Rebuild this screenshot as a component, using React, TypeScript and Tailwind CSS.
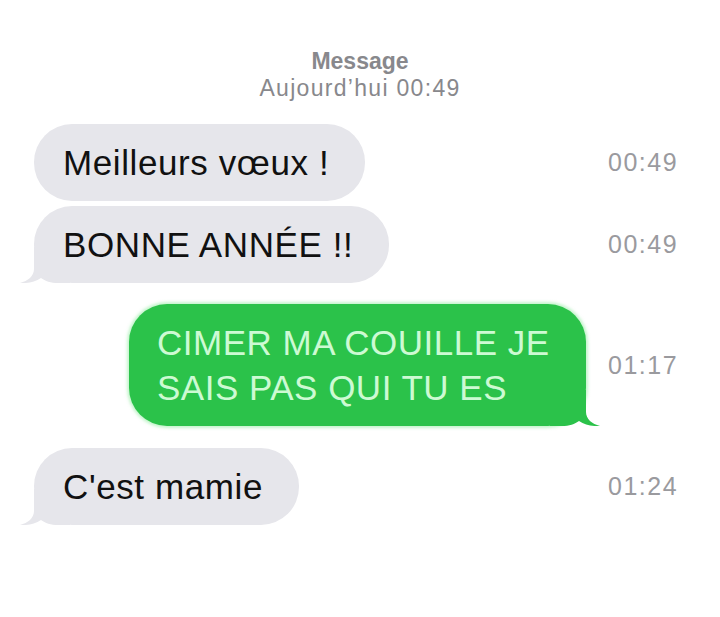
import React from "react";

const Tail = ({ color, side }: { color: string; side: "left" | "right" }) => (
  <svg
    width="50"
    height="36"
    viewBox="0 0 50 36"
    className={
      side === "left"
        ? "absolute bottom-0 left-[-14px]"
        : "absolute bottom-0 right-[-14px] -scale-x-100"
    }
  >
    <path
      d="M14 0 L14 22 C14 29 8 34 0 36 C8 36.5 15 35 21 31 C25 34 31 36 38 36 L50 36 L50 0 Z"
      fill={color}
    />
  </svg>
);

const Time = ({ children }: { children: React.ReactNode }) => (
  <span className="ml-auto w-[72px] text-[25px] leading-none tracking-[1.5px] text-[#9a9a9e]">
    {children}
  </span>
);

const Received = ({ text, tail }: { text: string; tail?: boolean }) => (
  <div className="relative rounded-[38px] bg-[#e6e6eb] py-[16px] pl-[29px] pr-[36px] text-[35px] leading-[45px] tracking-[0.6px] text-[#111]">
    {tail && <Tail color="#e6e6eb" side="left" />}
    <span className="relative">{text}</span>
  </div>
);

export default function App() {
  return (
    <div className="h-[617px] w-[720px] bg-white font-['Liberation_Sans',Arial,sans-serif]">
      <div className="flex flex-col items-center pt-[48px] text-[23px] leading-[27px] text-[#88888c]">
        <span className="font-semibold">Message</span>
        <span className="tracking-[1.3px]">Aujourd’hui 00:49</span>
      </div>

      <div className="flex flex-col pl-[34px] pr-[40px] pt-[22px]">
        <div className="flex items-center">
          <Received text="Meilleurs vœux !" />
          <Time>00:49</Time>
        </div>
        <div className="mt-[5px] flex items-center">
          <Received text="BONNE ANNÉE !!" tail />
          <Time>00:49</Time>
        </div>

        <div className="mt-[21px] flex items-center">
          <div className="relative ml-[95px] rounded-[38px] bg-[#2bc24a] py-[16px] pl-[28px] pr-[36px] text-[35px] leading-[45px] tracking-[0.5px] text-[#cdfad3] shadow-[0_0_3px_2px_rgba(140,235,155,0.5)]">
            <Tail color="#2bc24a" side="right" />
            <span className="relative">
              CIMER MA COUILLE JE
              <br />
              SAIS PAS QUI TU ES
            </span>
          </div>
          <Time>01:17</Time>
        </div>

        <div className="mt-[22px] flex items-center">
          <Received text="C'est mamie" tail />
          <Time>01:24</Time>
        </div>
      </div>
    </div>
  );
}
